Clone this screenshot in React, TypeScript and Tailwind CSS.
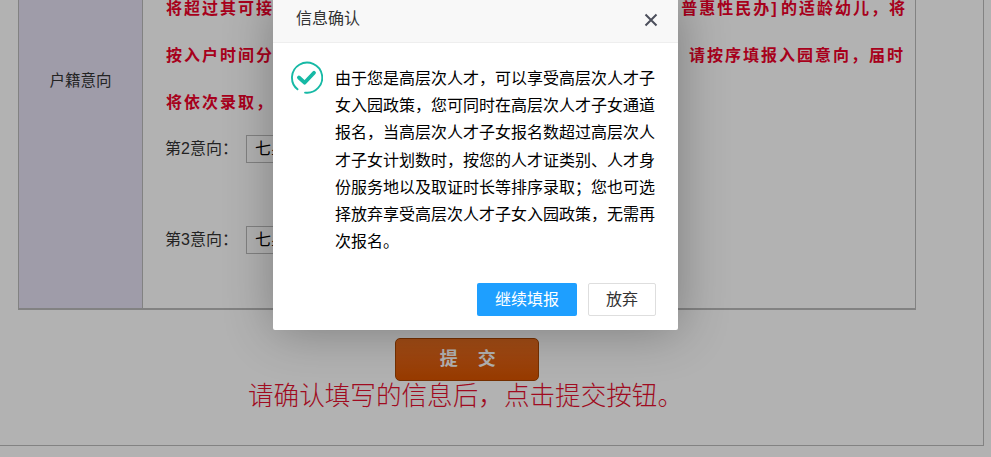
const cjk = "font-['Liberation_Sans','Noto_Sans_CJK_SC',sans-serif]";

function WishRow({ label, value }: { label: string; value: string }) {
  return (
    <div className="flex items-center h-[28px] pl-[22px]">
      <span className="w-[81px] text-[16px] text-[#333]">{label}</span>
      <div className="w-[260px] h-[28px] pl-[8px] border border-[#bbb] bg-white text-[16px] leading-[26px] text-black">{value}</div>
    </div>
  );
}

function CheckIcon() {
  return (
    <svg width="34" height="35" viewBox="0 0 36 36" fill="none" className="shrink-0">
      <path d="M9 30.5 A16 16 0 1 1 17 34" stroke="#16b9a5" strokeWidth="2" strokeLinecap="round" />
      <path d="M10.5 18 L16.5 23.5 L26.5 13" stroke="#16b9a5" strokeWidth="4" strokeLinecap="round" strokeLinejoin="round" />
    </svg>
  );
}

export default function App() {
  return (
    <div className={`relative w-[991px] h-[457px] overflow-hidden bg-white ${cjk}`}>
      {/* page behind the overlay */}
      <div className="w-[984px] h-[446px] pl-[18px] border-r border-b border-[#bbb]">
        <div className="w-[898px] h-[310px] grid grid-cols-[124px_1fr] border-l border-r border-b-2 border-[#bbb]">
          <div className="flex items-center justify-center pb-[146px] bg-[#e4e0f3] border-r border-[#bbb] text-[15.5px] text-[#333]">
            <span>户籍意向</span>
          </div>
          <div className="overflow-hidden">
            <div className="-mt-[14px] pl-[23px] pr-[8px] text-[16px] font-bold tracking-[2px] leading-[46.75px] text-[#f0002a]">
              <div className="flex justify-between">
                <span>将超过其可接</span>
                <span>普惠性民办<span className="tracking-[4.5px]">]</span>的适龄幼儿，将</span>
              </div>
              <div className="flex justify-between pr-[2px]">
                <span>按入户时间分</span>
                <span>请按序填报入园意向，届时</span>
              </div>
              <div>将依次录取，</div>
            </div>
            <div className="mt-[9px] flex flex-col gap-[63px]">
              <WishRow label="第2意向：" value="七星" />
              <WishRow label="第3意向：" value="七星" />
            </div>
          </div>
        </div>
        <div className="w-[898px] flex flex-col items-center">
          <button className="mt-[28px] w-[144px] h-[43px] pl-[3px] rounded-[5px] border border-[#a84500] bg-gradient-to-b from-[#e96f20] to-[#da5400] text-[18px] font-bold tracking-[1.25px] text-white">
            提&nbsp;&nbsp;&nbsp;交
          </button>
          <p className="-ml-[3px] text-[25.6px] leading-[30px] font-light text-[#e5112f]">请确认填写的信息后，点击提交按钮。</p>
        </div>
      </div>

      {/* dimmed overlay */}
      <div className="absolute inset-0 bg-black/30" />

      {/* dialog */}
      <div className="absolute left-[273px] -top-[1px] w-[405px] h-[331px] rounded-[2px] bg-white shadow-[1px_1px_50px_rgba(0,0,0,0.3)] flex flex-col">
        <div className="h-[44px] shrink-0 flex items-center justify-between pl-[23px] pr-[20px] bg-[#f8f8f8] border-b border-[#eee] text-[16px] text-[#333]">
          <span className="-mt-[4px]">信息确认</span>
          <svg width="14" height="14" viewBox="0 0 14 14" fill="none" className="mt-[-2px]">
            <path d="M1.5 1.5 L12.5 12.5 M12.5 1.5 L1.5 12.5" stroke="#4c4f5c" strokeWidth="2" />
          </svg>
        </div>
        <div className="flex-1 flex pl-[16px] pr-[22px] pt-[17px] gap-[13px]">
          <CheckIcon />
          <p className="pt-[5px] -ml-[1px] text-[16px] leading-[27.2px] text-black">
            由于您是高层次人才，可以享受高层次人才子女入园政策，您可同时在高层次人才子女通道报名，当高层次人才子女报名数超过高层次人才子女计划数时，按您的人才证类别、人才身份服务地以及取证时长等排序录取；您也可选择放弃享受高层次人才子女入园政策，无需再次报名。
          </p>
        </div>
        <div className="flex justify-end gap-[11px] pr-[22px] pb-[14px]">
          <button className="w-[100px] h-[33px] rounded-[2px] bg-[#1e9fff] text-[16px] text-white">继续填报</button>
          <button className="w-[68px] h-[33px] rounded-[2px] border border-[#dedede] bg-white text-[16px] text-[#333]">放弃</button>
        </div>
      </div>
    </div>
  );
}
